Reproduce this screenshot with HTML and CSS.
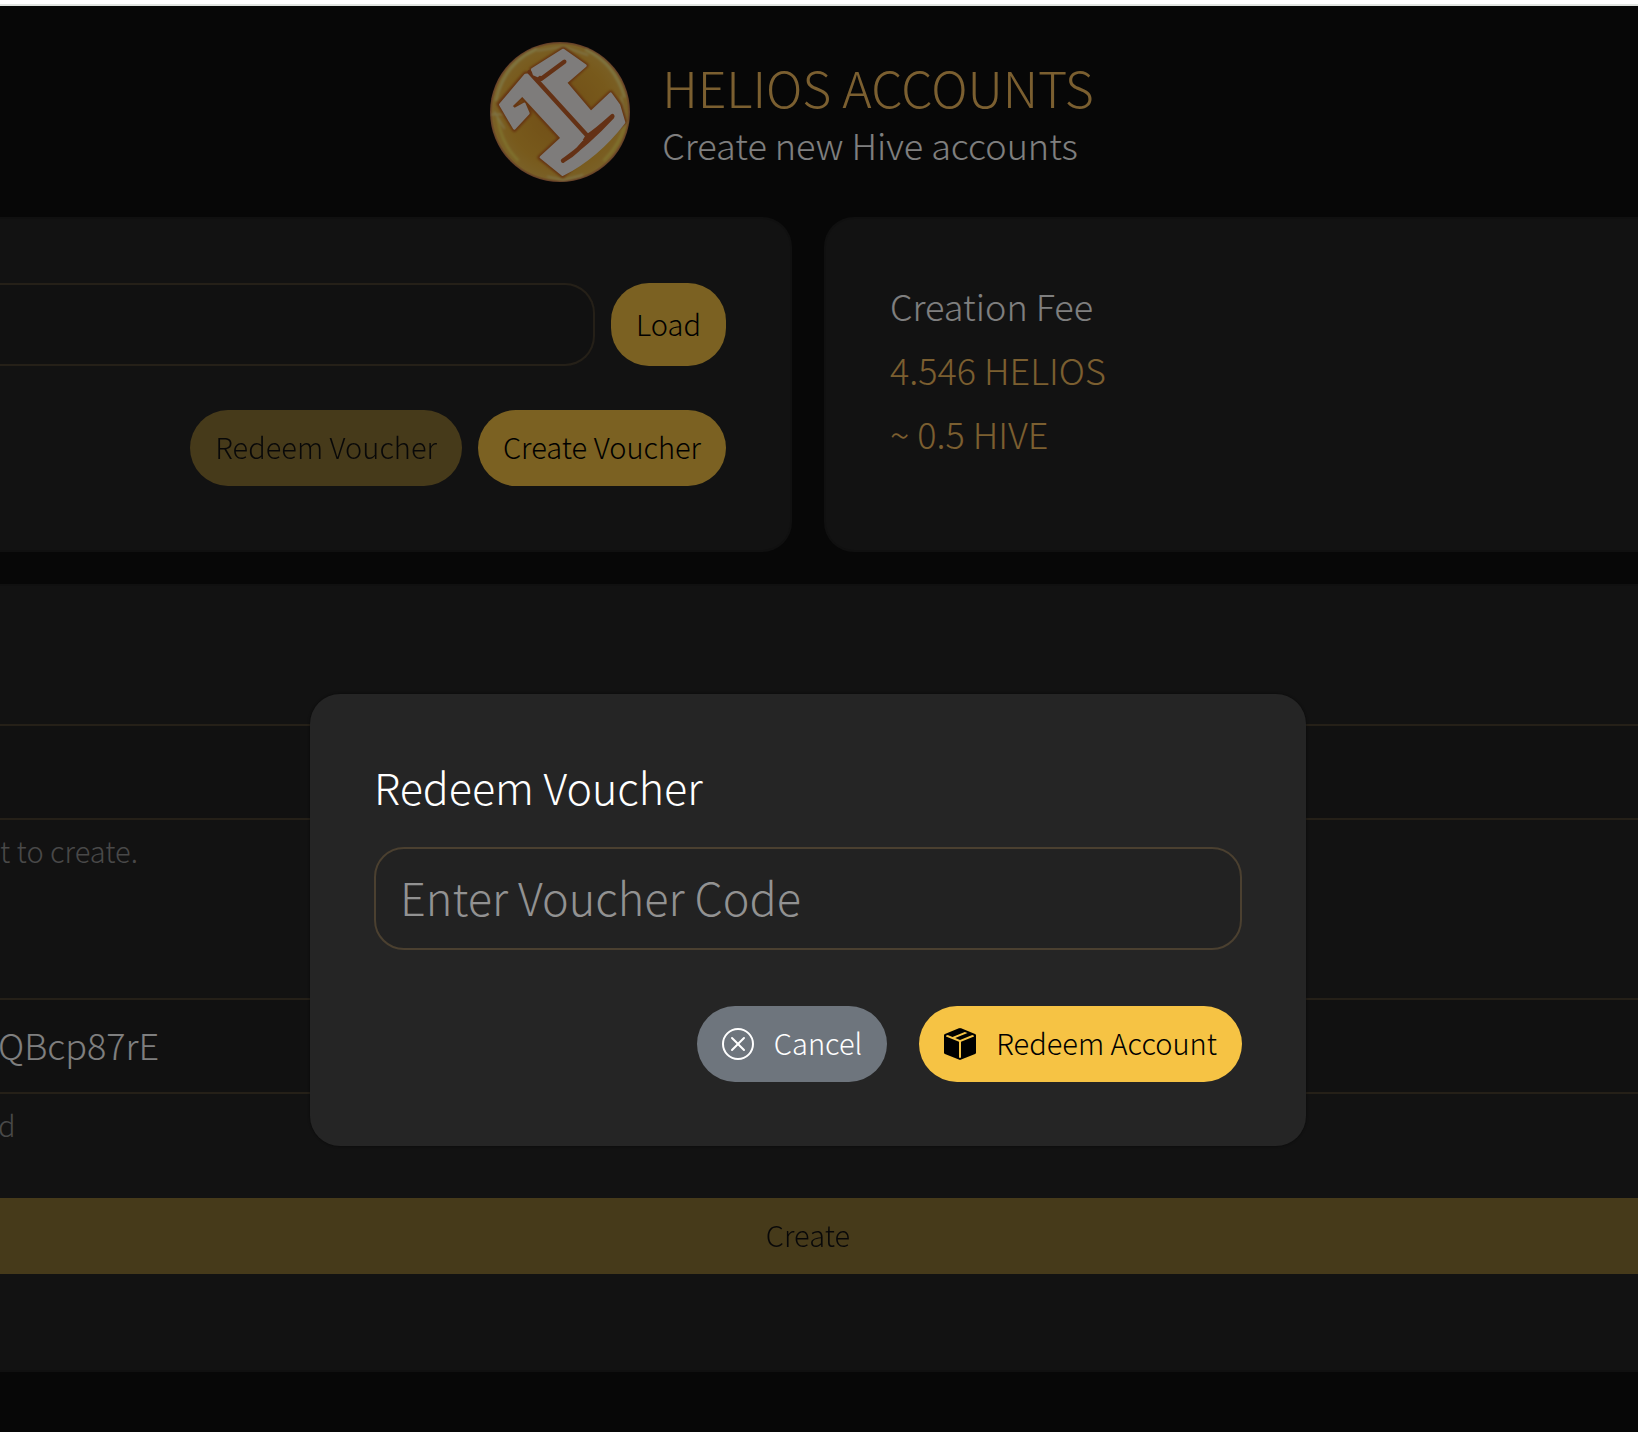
FILE: index.html
```html
<!DOCTYPE html>
<html lang="en">
<head>
<meta charset="utf-8">
<meta name="viewport" content="width=device-width, initial-scale=1">
<title>Helios Accounts</title>
<link rel="stylesheet" href="styles.css">
</head>
<body>
<div class="app">
  <header class="header">
    <svg class="logo" viewBox="57 126 420 420" aria-hidden="true">
      <defs>
        <radialGradient id="gold" cx="50%" cy="50%" r="50%">
          <stop offset="0" stop-color="#e09a2c"/>
          <stop offset="0.75" stop-color="#f0b438"/>
          <stop offset="0.96" stop-color="#f4c04c"/>
          <stop offset="1" stop-color="#c87850"/>
        </radialGradient>
        <filter id="soft"><feGaussianBlur stdDeviation="3"/></filter>
        <filter id="edge"><feGaussianBlur stdDeviation="1"/></filter>
      </defs>
      <circle cx="267" cy="336" r="210" fill="url(#gold)"/>
      <g fill="none" stroke-linecap="round" filter="url(#soft)">
        <path d="M75 300Q100 190 195 148M345 150Q430 190 460 290" stroke="#fff08c" stroke-width="7"/>
        <path d="M80 355Q90 430 140 480M462 370Q450 430 400 480" stroke="#ffe45c" stroke-width="8"/>
        <path d="M62 344L105 342M70 335L100 385M280 140L200 152M278 140L350 165M470 365L430 400M465 360L450 290M277 540L230 530M277 540L335 525" stroke="#fff09c" stroke-width="4"/>
      </g>
      <path fill="#cc6a24" stroke="#cc6a24" stroke-width="14" stroke-linejoin="round" filter="url(#soft)" d="M182 208L277 147L346 196L288 248L360 333L419 278L447 316L462 365L275 527L206 472L268 414L154 290L124 318L132 326L162 308L176 340L130 389L84 312L163 221L190 224Z"/>
      <path fill="#fdf9f6" stroke="#fdf9f6" stroke-width="8" stroke-linejoin="round" d="M184 208L277 150L343 197L284 248L360 337L419 281L444 316L459 367Q380 470 275 524L210 472L273 414L154 285L120 318L130 328L160 312L172 340L130 385L88 314L163 225L186 222Z"/>
      <g fill="none" stroke="#c8642a" stroke-linecap="round" stroke-linejoin="round" stroke-width="13" filter="url(#edge)">
        <path d="M280 185L210 237L190 222"/>
        <path d="M175 216L349 407"/>
        <path d="M276 482Q330 450 350 408Q375 392 424 348M276 482Q350 430 424 350"/>
      </g>
      <path fill="#fdf9f6" d="M200 232L186 226L180 208L205 206L216 220Z"/>
      <path fill="#fdf9f6" d="M268 414L338 420L275 470L240 460Z"/>
    </svg>
    <div class="brand">
      <h1 class="brand-title">HELIOS ACCOUNTS</h1>
      <p class="brand-sub">Create new Hive accounts</p>
    </div>
  </header>

  <main class="content">
    <div class="cards">
      <section class="card card-account">
        <form class="row">
          <input class="field" type="text" aria-label="Account">
          <button class="btn btn-load" type="button">Load</button>
        </form>
        <div class="row row-end">
          <button class="btn" type="button" disabled>Redeem Voucher</button>
          <button class="btn" type="button">Create Voucher</button>
        </div>
      </section>
      <section class="card card-fee">
        <p>Creation Fee</p>
        <p class="gold">4.546 HELIOS</p>
        <p class="gold">~ 0.5 HIVE</p>
      </section>
    </div>

    <form class="create">
      <div class="group">
        <input class="line-field" type="text" aria-label="Username" aria-describedby="name-help">
        <p class="help" id="name-help">t to create.</p>
      </div>
      <div class="group">
        <input class="line-field" type="text" aria-label="Password" aria-describedby="pass-help" value="QBcp87rE">
        <p class="help" id="pass-help">d</p>
      </div>
      <button class="btn btn-create" type="button" disabled>Create</button>
    </form>
  </main>

  <div class="overlay">
    <div class="modal" role="dialog" aria-modal="true" aria-labelledby="modal-title">
      <h2 class="modal-title" id="modal-title">Redeem Voucher</h2>
      <input class="modal-field" type="text" placeholder="Enter Voucher Code" aria-label="Voucher code">
      <div class="modal-actions">
        <button class="btn btn-cancel" type="button">
          <svg class="icon" viewBox="0 0 16 16" fill="currentColor" aria-hidden="true"><path d="M8 15A7 7 0 1 1 8 1a7 7 0 0 1 0 14m0 1A8 8 0 1 0 8 0a8 8 0 0 0 0 16"/><path d="M4.646 4.646a.5.5 0 0 1 .708 0L8 7.293l2.646-2.647a.5.5 0 0 1 .708.708L8.707 8l2.647 2.646a.5.5 0 0 1-.708.708L8 8.707l-2.646 2.647a.5.5 0 0 1-.708-.708L7.293 8 4.646 5.354a.5.5 0 0 1 0-.708"/></svg>
          <span class="label">Cancel</span>
        </button>
        <button class="btn" type="button">
          <svg class="icon" viewBox="0 0 16 16" fill="currentColor" aria-hidden="true"><path fill-rule="evenodd" d="M15.528 2.973a.75.75 0 0 1 .472.696v8.662a.75.75 0 0 1-.472.696l-7.25 2.9a.75.75 0 0 1-.557 0l-7.25-2.9A.75.75 0 0 1 0 12.331V3.669a.75.75 0 0 1 .471-.696L7.443.184l.01-.003.268-.108a.75.75 0 0 1 .558 0l.269.108.01.003zM10.404 2 4.25 4.461 1.846 3.5 1 3.839v.4l6.5 2.6v7.922l.5.2.5-.2V6.84l6.5-2.6v-.4l-.846-.339L8 5.961 5.596 5l6.154-2.461z"/></svg>
          <span class="label">Redeem Account</span>
        </button>
      </div>
    </div>
  </div>
</div>
</body>
</html>
```
FILE: styles.css
```css
* {
  box-sizing: border-box;
}

body {
  margin: 0;
  min-height: 100vh;
  overflow-x: hidden;
  background: #0e0e0e;
  border-top: 4px solid #fff;
  color: #fff;
  font-family: "Noto Sans CJK SC", "Noto Sans", sans-serif;
  font-weight: 300;
  display: flex;
}

h1, h2, p {
  margin: 0;
  font-weight: 300;
}

button, input {
  font: inherit;
  color: inherit;
}

/* The page is panned slightly to the right, so its left edge is off screen. */
.app {
  position: relative;
  flex: 1;
  margin-left: -22px;
  border-top: 2px solid #e0e4e0;
}

.header {
  display: flex;
  justify-content: center;
  align-items: center;
  padding: 36px 0 35px;
}

.logo {
  width: 140px;
  height: 140px;
}

.brand {
  display: flex;
  flex-direction: column;
  gap: 4px;
  padding: 0 32px;
}

.brand-title {
  color: #f6be60;
  font-size: 50px;
  line-height: 60px;
}

.brand-sub {
  font-size: 36px;
  line-height: 48px;
}

.content {
  display: flex;
  flex-direction: column;
  gap: 32px;
}

.cards {
  display: grid;
  grid-template-columns: 1fr 1fr;
  gap: 32px;
}

.card {
  padding: 64px;
  background: #242424;
  border: 2px solid #202020;
}

.card-account {
  display: flex;
  flex-direction: column;
  gap: 44px;
  padding-left: 0;
  border-left: 0;
  border-radius: 0 30px 30px 0;
}

.card-fee {
  padding: 54px 64px;
  border-right: 0;
  border-radius: 30px 0 0 30px;
  font-size: 36px;
  line-height: 64px;
}

.gold {
  color: #f6be60;
}

.row {
  display: flex;
  gap: 16px;
}

.row-end {
  justify-content: flex-end;
}

.field {
  flex: 1;
  min-width: 0;
  padding: 0 24px;
  background: #222;
  border: 2px solid #4b4030;
  border-left: 0;
  border-radius: 0 30px 30px 0;
}

.btn {
  display: inline-flex;
  align-items: center;
  justify-content: center;
  gap: 20px;
  height: 76px;
  padding: 0 25px 4px;
  border: 0;
  border-radius: 38px;
  background: #f6c344;
  color: #000;
  font-size: 29px;
  white-space: nowrap;
}

.btn:disabled {
  opacity: 0.5;
}

.btn-load {
  height: 83px;
}

.create {
  display: flex;
  flex-direction: column;
  padding: 138px 0 96px;
  background: #242424;
  border: solid #202020;
  border-width: 2px 0;
}

.group {
  display: flex;
  flex-direction: column;
  gap: 6px;
  min-height: 274px;
}

.group + .group {
  min-height: 200px;
}

.line-field {
  width: 100%;
  height: 96px;
  padding: 0 20px 4px;
  background: #222;
  border: solid #4b4030;
  border-width: 2px 0;
  border-radius: 0;
  font-size: 36px;
}

.help {
  padding-left: 22px;
  color: #929292;
  font-size: 29px;
  line-height: 48px;
}

#pass-help {
  padding-left: 20px;
}

.btn-create {
  border-radius: 0;
}

.overlay {
  position: absolute;
  inset: 0;
  display: flex;
  justify-content: center;
  align-items: flex-start;
  padding-top: 688px;
  background: rgba(0, 0, 0, 0.5);
}

.modal {
  width: 60%;
  display: flex;
  flex-direction: column;
  padding: 64px;
  background: #252525;
  border-radius: 30px;
  box-shadow: 0 0 2px 1px rgba(0, 0, 0, 0.25);
}

.modal-title {
  font-size: 43px;
  line-height: 56px;
}

.modal-field {
  height: 103px;
  margin: 33px 0 56px;
  padding: 0 24px 4px;
  background: #222;
  border: 2px solid #4b4030;
  border-radius: 30px;
  font-size: 45px;
}

.modal-field::placeholder {
  color: #929292;
}

.modal-actions {
  display: flex;
  justify-content: flex-end;
  gap: 32px;
}

.modal-actions .btn {
  padding-bottom: 0;
}

.modal-actions .label {
  padding-bottom: 4px;
}

.btn-cancel {
  background: #6e757d;
  color: #fff;
}

.icon {
  width: 32px;
  height: 32px;
}
```
